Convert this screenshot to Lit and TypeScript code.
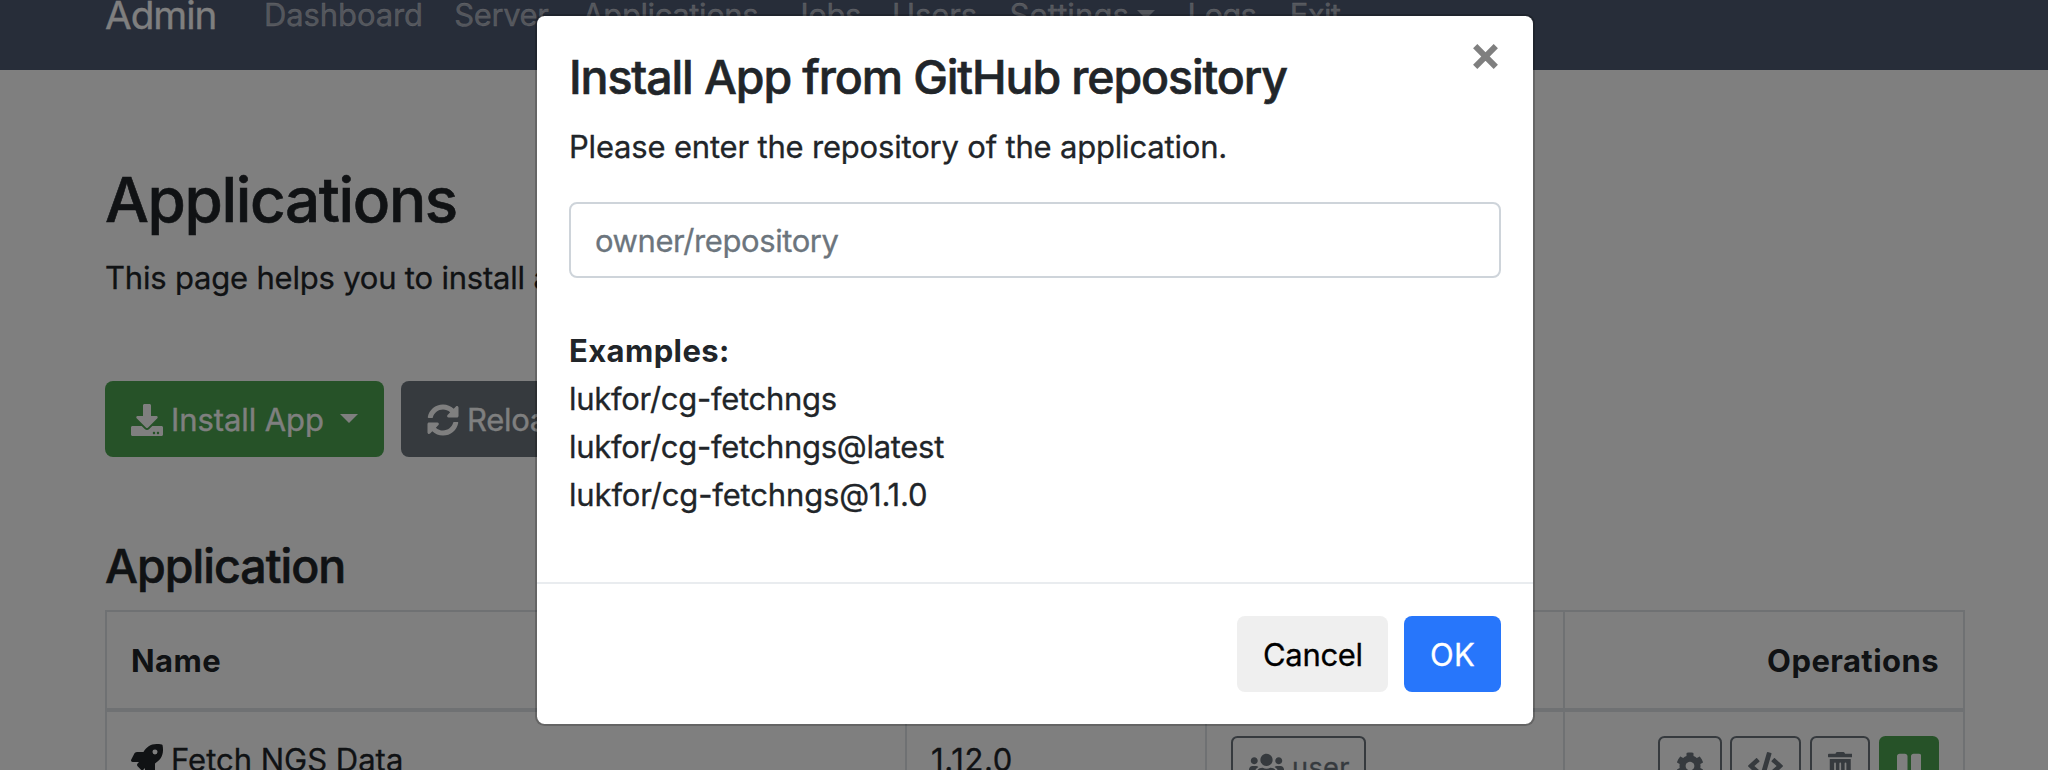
import { LitElement, html, css, svg } from 'lit';
import { customElement, state } from 'lit/decorators.js';

interface Glyph {
  width: number;
  path: string;
}

const GLYPHS: Record<string, Glyph> = {
  download: {
    width: 512,
    path: 'M216 0h80c13.3 0 24 10.7 24 24v168h87.7c17.8 0 26.7 21.5 14.1 34.1L269.7 378.3c-7.5 7.5-19.8 7.5-27.3 0L90.1 226.1c-12.6-12.6-3.7-34.1 14.1-34.1H192V24c0-13.3 10.7-24 24-24zm296 376v112c0 13.3-10.7 24-24 24H24c-13.3 0-24-10.7-24-24V376c0-13.3 10.7-24 24-24h146.7l49 49c20.1 20.1 52.5 20.1 72.6 0l49-49H488c13.3 0 24 10.7 24 24zm-124 88c0-11-9-20-20-20s-20 9-20 20 9 20 20 20 20-9 20-20zm64 0c0-11-9-20-20-20s-20 9-20 20 9 20 20 20 20-9 20-20z',
  },
  sync: {
    width: 512,
    path: 'M370.72 133.28C339.458 104.008 298.888 87.962 255.848 88c-77.458.068-144.328 53.178-162.791 126.85-1.344 5.363-6.122 9.15-11.651 9.15H24.103c-7.498 0-13.194-6.807-11.807-14.176C33.933 94.924 134.813 8 256 8c66.448 0 126.791 26.136 171.315 68.685L463.03 40.97C478.149 25.851 504 36.559 504 57.941V192c0 13.255-10.745 24-24 24H345.941c-21.382 0-32.09-25.851-16.971-40.971l41.75-41.749zM32 296h134.059c21.382 0 32.09 25.851 16.971 40.971l-41.75 41.75c31.262 29.273 71.835 45.319 114.876 45.28 77.418-.07 144.315-53.144 162.787-126.849 1.344-5.363 6.122-9.15 11.651-9.15h57.304c7.498 0 13.194 6.807 11.807 14.176C478.067 417.076 377.187 504 256 504c-66.448 0-126.791-26.136-171.315-68.685L48.97 471.03C33.851 486.149 8 475.441 8 454.059V320c0-13.255 10.745-24 24-24z',
  },
  rocket: {
    width: 512,
    path: 'M505.12 19.094c-1.19-5.531-6.658-11-12.207-12.188C460.716 0 435.507 0 410.407 0 307.175 0 245.27 55.203 199.052 128H94.838c-16.348.016-35.557 11.875-42.887 26.484L2.516 253.297A28.4 28.4 0 0 0 0 264a24.009 24.009 0 0 0 24.006 24h103.81l-22.474 22.469c-11.366 11.361-12.996 32.258 0 45.25l50.904 50.906c11.156 11.188 32.156 13.156 45.277 0l22.475-22.469V488a24.009 24.009 0 0 0 24.006 24 28.56 28.56 0 0 0 10.707-2.516l98.728-49.39c14.63-7.297 26.508-26.5 26.508-42.86V312.797c72.598-46.313 128.035-108.406 128.035-211.094.093-25.203.093-50.406-6.862-82.609zM384.04 168A40 40 0 1 1 424.05 128 40.023 40.023 0 0 1 384.04 168z',
  },
  users: {
    width: 640,
    path: 'M96 224c35.3 0 64-28.7 64-64s-28.7-64-64-64-64 28.7-64 64 28.7 64 64 64zm448 0c35.3 0 64-28.7 64-64s-28.7-64-64-64-64 28.7-64 64 28.7 64 64 64zm32 32h-64c-17.6 0-33.5 7.1-45.1 18.6 40.3 22.1 68.9 62 75.1 109.4h66c17.7 0 32-14.3 32-32v-32c0-35.3-28.7-64-64-64zm-256 0c61.9 0 112-50.1 112-112S381.9 32 320 32 208 82.1 208 144s50.1 112 112 112zm76.8 32h-8.3c-20.8 10-43.9 16-68.5 16s-47.6-6-68.5-16h-8.3C179.6 288 128 339.6 128 403.2V432c0 26.5 21.5 48 48 48h288c26.5 0 48-21.5 48-48v-28.8c0-63.6-51.6-115.2-115.2-115.2zm-223.7-13.4C161.5 263.1 145.6 256 128 256H64c-35.3 0-64 28.7-64 64v32c0 17.7 14.3 32 32 32h65.9c6.3-47.4 34.9-87.3 75.2-109.4z',
  },
  cog: {
    width: 512,
    path: 'M487.4 315.7l-42.6-24.6c4.3-23.2 4.3-47 0-70.2l42.6-24.6c4.9-2.8 7.1-8.6 5.5-14-11.1-35.6-30-67.8-54.7-94.6-3.8-4.1-10-5.1-14.8-2.3L380.8 110c-17.9-15.4-38.5-27.3-60.8-35.1V25.8c0-5.6-3.9-10.5-9.4-11.7-36.7-8.2-74.3-7.8-109.2 0-5.5 1.2-9.4 6.1-9.4 11.7V75c-22.2 7.9-42.8 19.8-60.8 35.1L88.7 85.5c-4.9-2.8-11-1.9-14.8 2.3-24.7 26.7-43.6 58.9-54.7 94.6-1.7 5.4.6 11.2 5.5 14L67.3 221c-4.3 23.2-4.3 47 0 70.2l-42.6 24.6c-4.9 2.8-7.1 8.6-5.5 14 11.1 35.6 30 67.8 54.7 94.6 3.8 4.1 10 5.1 14.8 2.3l42.6-24.6c17.9 15.4 38.5 27.3 60.8 35.1v49.2c0 5.6 3.9 10.5 9.4 11.7 36.7 8.2 74.3 7.8 109.2 0 5.5-1.2 9.4-6.1 9.4-11.7v-49.2c22.2-7.9 42.8-19.8 60.8-35.1l42.6 24.6c4.9 2.8 11 1.9 14.8-2.3 24.7-26.7 43.6-58.9 54.7-94.6 1.5-5.5-.7-11.3-5.6-14.1zM256 336c-44.1 0-80-35.9-80-80s35.9-80 80-80 80 35.9 80 80-35.9 80-80 80z',
  },
  code: {
    width: 640,
    path: 'M278.9 511.5l-61-17.7c-6.4-1.8-10-8.5-8.2-14.9L346.2 8.7c1.8-6.4 8.5-10 14.9-8.2l61 17.7c6.4 1.8 10 8.5 8.2 14.9L293.8 503.3c-1.9 6.4-8.5 10.1-14.9 8.2zm-114-112.2l43.5-46.4c4.6-4.9 4.3-12.7-.8-17.2L117 256l90.6-79.7c5.1-4.5 5.5-12.3.8-17.2l-43.5-46.4c-4.5-4.8-12.1-5.1-17-.5L3.8 247.2c-5.1 4.7-5.1 12.8 0 17.5l144.1 135.1c4.9 4.6 12.5 4.4 17-.5zm327.2.6l144.1-135.1c5.1-4.7 5.1-12.8 0-17.5L492.1 112.1c-4.8-4.5-12.4-4.3-17 .5L431.6 159c-4.6 4.9-4.3 12.7.8 17.2L523 256l-90.6 79.7c-5.1 4.5-5.5 12.3-.8 17.2l43.5 46.4c4.5 4.9 12.1 5.1 17 .6z',
  },
  trash: {
    width: 448,
    path: 'M32 464a48 48 0 0 0 48 48h288a48 48 0 0 0 48-48V128H32zm272-256a16 16 0 0 1 32 0v224a16 16 0 0 1-32 0zm-96 0a16 16 0 0 1 32 0v224a16 16 0 0 1-32 0zm-96 0a16 16 0 0 1 32 0v224a16 16 0 0 1-32 0zM432 32H312l-9.4-18.7A24 24 0 0 0 281.1 0H166.8a23.72 23.72 0 0 0-21.4 13.3L136 32H16A16 16 0 0 0 0 48v32a16 16 0 0 0 16 16h416a16 16 0 0 0 16-16V48a16 16 0 0 0-16-16z',
  },
  pause: {
    width: 448,
    path: 'M144 479H48c-26.5 0-48-21.5-48-48V79c0-26.5 21.5-48 48-48h96c26.5 0 48 21.5 48 48v352c0 26.5-21.5 48-48 48zm304-48V79c0-26.5-21.5-48-48-48h-96c-26.5 0-48 21.5-48 48v352c0 26.5 21.5 48 48 48h96c26.5 0 48-21.5 48-48z',
  },
};

const icon = (name: string, size: number) => {
  const g = GLYPHS[name];
  return html`<svg
    class="icon"
    width=${(size * g.width) / 512}
    height=${size}
    viewBox="0 0 ${g.width} 512"
    aria-hidden="true"
  >${svg`<path fill="currentColor" d=${g.path}></path>`}</svg>`;
};

const OPERATIONS = [
  { glyph: 'cog', title: 'Settings', cls: 'op cog' },
  { glyph: 'code', title: 'Source', cls: 'op code' },
  { glyph: 'trash', title: 'Delete', cls: 'op trash' },
  { glyph: 'pause', title: 'Disable', cls: 'op pause' },
];

@customElement('app-root')
export class AppRoot extends LitElement {
  @state() private repository = '';

  static styles = css`
    :host {
      display: block;
      position: relative;
      height: 770px;
      overflow: hidden;
      background: #fff;
      color: #212529;
      font: 400 31px/48px Inter, 'Liberation Sans', sans-serif;
      letter-spacing: -0.2px;
      -webkit-text-stroke: 0.3px currentColor;
    }
    * { box-sizing: border-box; }
    h2, h4, p { margin: 0; font-weight: 500; }
    h2, h4 { -webkit-text-stroke-width: 0.6px; }
    p { font-weight: 400; }
    button, input { font: inherit; letter-spacing: inherit; margin: 0; }
    .icon { display: block; flex: none; -webkit-text-stroke: 0; }
    .caret {
      display: inline-block;
      border-top: 9px solid currentColor;
      border-left: 9px solid transparent;
      border-right: 9px solid transparent;
    }

    .navbar {
      display: grid;
      grid-template-columns: 159px 190.3px 128.1px 208.6px 101px 117.5px 178.1px 102.2px auto;
      align-items: start;
      height: 70px;
      padding-left: 105px;
      background: #4f5a73;
      color: rgba(255, 255, 255, 0.5);
      line-height: 29px;
      white-space: nowrap;
    }
    .brand { color: #fff; font-size: 38.7px; line-height: 30px; letter-spacing: -1.01px; }
    .wide { letter-spacing: -0.1px; }
    .tight { letter-spacing: -0.41px; }
    .tighter { letter-spacing: -0.7px; }
    .settings { display: flex; align-items: flex-start; gap: 8px; letter-spacing: 0.1px; }
    .settings .caret { margin-top: 10px; }

    .page { padding: 91px 83px 0 105px; }
    .page h2 { font-size: 62px; line-height: 77px; letter-spacing: -1.37px; }
    .lead { margin-top: 15.5px; }
    .actions { display: flex; gap: 17px; margin-top: 79.5px; }
    .btn {
      display: flex;
      align-items: center;
      height: 76px;
      padding: 1px 26px 0;
      border: 0;
      border-radius: 8px;
      color: #fff;
      white-space: nowrap;
    }
    .btn.success { width: 279px; background: #4ca550; letter-spacing: -0.08px; }
    .btn.secondary { background: #6c757d; letter-spacing: -0.3px; }
    .btn .icon { margin-right: 8px; }
    .btn .caret { margin: -3px 0 0 16px; }
    .page h4 { margin-top: 80px; font-size: 46.5px; line-height: 58px; letter-spacing: -0.99px; }

    .table {
      display: grid;
      grid-template-columns: 800px 300px 358px 402px;
      width: 1860px;
      margin-top: 15px;
      border-top: 2px solid #dee2e6;
    }
    .cell {
      display: flex;
      padding: 24px;
      border-left: 2px solid #dee2e6;
    }
    .cell:nth-child(4n) { border-right: 2px solid #dee2e6; justify-content: flex-end; }
    .head {
      height: 100px;
      padding-top: 25px;
      border-bottom: 4px solid #dee2e6;
      font-weight: 700;
      letter-spacing: 0.44px;
      -webkit-text-stroke-width: 0;
    }
    .row { height: 110px; }
    .row .icon { margin-right: 8px; }
    .app-name { letter-spacing: 0; }
    .app-name .icon { margin-top: 8px; }
    .version { letter-spacing: 0.65px; }
    .badge {
      display: flex;
      align-items: flex-start;
      width: 135px;
      height: 62px;
      padding: 16px 16px 0;
      border: 2px solid #6c757d;
      border-radius: 6.4px;
      color: #6c757d;
      font-size: 27.1px;
      line-height: 28px;
      letter-spacing: 0.39px;
    }
    .badge .icon { margin-top: -2px; }
    .op {
      display: flex;
      align-items: flex-start;
      justify-content: center;
      height: 62px;
      padding: 14px 0 0;
      border: 2px solid #6c757d;
      border-radius: 6.4px;
      background: none;
      color: #6c757d;
    }
    .op .icon { margin: 0; }
    .op.cog { width: 64px; }
    .op.code { width: 71px; margin-left: 8px; }
    .op.trash { width: 60px; margin-left: 9px; }
    .op.pause { width: 60px; margin-left: 9px; background: #4ca550; border-color: #4ca550; color: #fff; }

    .overlay {
      position: absolute;
      inset: 0;
      display: flex;
      justify-content: center;
      align-items: flex-start;
      padding: 14px 0 0 22px;
      background: rgba(0, 0, 0, 0.5);
    }
    .modal {
      width: 1000px;
      border: 2px solid rgba(0, 0, 0, 0.2);
      border-radius: 9.6px;
      background: #fff;
      background-clip: padding-box;
    }
    .modal-body { padding: 32px 32px 63px; }
    .modal-top { display: flex; justify-content: space-between; align-items: flex-start; }
    .modal h4 { margin-top: 1px; font-size: 46.5px; line-height: 57px; letter-spacing: -1.13px; }
    .close { display: block; margin: -5px 2px 0 0; padding: 0; border: 0; background: none; color: #7f7f7f; }
    .close .icon { margin-bottom: -5px; }
    .prompt { margin-top: 16.5px; letter-spacing: -0.19px; }
    .field {
      display: block;
      width: 100%;
      height: 76px;
      margin-top: 31.5px;
      padding: 0 24px;
      border: 2px solid #ced4da;
      border-radius: 8px;
      background: #fff;
      color: #495057;
      outline: none;
      letter-spacing: -0.416px;
    }
    .field::placeholder { color: #6c757d; opacity: 1; }
    .examples { margin-top: 49px; letter-spacing: -0.29px; }
    .examples b { display: block; font-weight: 700; letter-spacing: 0.4px; -webkit-text-stroke-width: 0; }
    .examples span { display: block; }
    .examples .numeric { letter-spacing: -0.154px; }
    .modal-footer {
      display: flex;
      justify-content: flex-end;
      gap: 16px;
      padding: 32px;
      border-top: 2px solid #e9ecef;
    }
    .btn.cancel { width: 151px; background: #efefef; color: #000; letter-spacing: -0.33px; }
    .btn.ok { width: 97px; background: #2776fb; letter-spacing: 0.4px; }
  `;

  private onInput(e: Event) {
    this.repository = (e.target as HTMLInputElement).value;
  }

  render() {
    return html`
      <nav class="navbar">
        <span class="brand">Admin</span>
        <span class="wide">Dashboard</span>
        <span class="tight">Server</span>
        <span class="tight">Applications</span>
        <span class="tight">Jobs</span>
        <span class="wide">Users</span>
        <span class="settings">Settings <i class="caret"></i></span>
        <span class="tighter">Logs</span>
        <span class="tighter">Exit</span>
      </nav>

      <main class="page">
        <h2>Applications</h2>
        <p class="lead">This page helps you to install applications.</p>
        <div class="actions">
          <button class="btn success">${icon('download', 32)}Install App<i class="caret"></i></button>
          <button class="btn secondary">${icon('sync', 32)}Reload</button>
        </div>
        <h4>Application</h4>
        <div class="table">
          <div class="cell head">Name</div>
          <div class="cell head"></div>
          <div class="cell head"></div>
          <div class="cell head">Operations</div>
          <div class="cell row app-name">${icon('rocket', 32)}Fetch NGS Data</div>
          <div class="cell row version">1.12.0</div>
          <div class="cell row">
            <span class="badge">${icon('users', 28)}<span>user</span></span>
          </div>
          <div class="cell row">
            ${OPERATIONS.map(
              (o) => html`<button class=${o.cls} title=${o.title}>${icon(o.glyph, 28)}</button>`
            )}
          </div>
        </div>
      </main>

      <div class="overlay">
        <section class="modal" role="dialog" aria-modal="true">
          <div class="modal-body">
            <div class="modal-top">
              <h4>Install App from GitHub repository</h4>
              <button class="close" aria-label="Close">
                <svg class="icon" width="27" height="27" viewBox="0 0 27 27">
                  <path d="M3.2 3.2 23.8 23.8M23.8 3.2 3.2 23.8" fill="none" stroke="currentColor" stroke-width="6"></path>
                </svg>
              </button>
            </div>
            <p class="prompt">Please enter the repository of the application.</p>
            <input
              class="field"
              placeholder="owner/repository"
              .value=${this.repository}
              @input=${this.onInput}
            />
            <div class="examples">
              <b>Examples:</b>
              <span>lukfor/cg-fetchngs</span>
              <span>lukfor/cg-fetchngs@latest</span>
              <span class="numeric">lukfor/cg-fetchngs@1.1.0</span>
            </div>
          </div>
          <div class="modal-footer">
            <button class="btn cancel">Cancel</button>
            <button class="btn ok">OK</button>
          </div>
        </section>
      </div>
    `;
  }
}
